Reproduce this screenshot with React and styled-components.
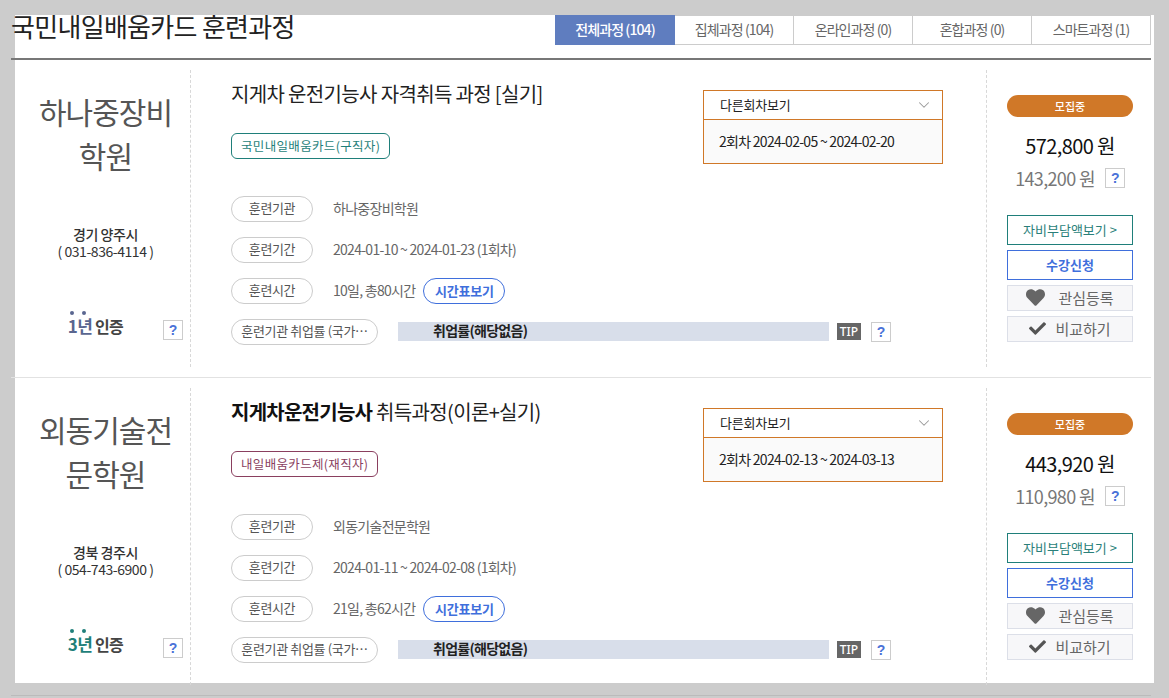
import React from 'react';
import styled, { createGlobalStyle } from 'styled-components';
import { FaHeart, FaCheck } from 'react-icons/fa';
import { ChevronDown } from 'lucide-react';

const Global = createGlobalStyle`
  html, body { margin: 0; padding: 0; background: #cccccc; }
  * { box-sizing: border-box; }
  body { font-family: "Noto Sans CJK KR", "Noto Sans", sans-serif; color: #333; }
`;
const Page = styled.div`
  width: 1169px; height: 698px; padding: 15px 15px 0; overflow: hidden; position: relative;
`;
const Panel = styled.div`
  width: 1139px; height: 668px; background: #fff;
`;
const Inner = styled.div`
  width: 1140px; margin-left: -4px;
`;
const Header = styled.div`
  height: 45px; border-bottom: 2px solid #777; display: flex; justify-content: space-between; align-items: flex-start;
`;
const Title = styled.h1`
  margin: 0; height: 29px; overflow: hidden; font-size: 26px; font-weight: 400; line-height: 22px; color: #222; letter-spacing: -0.7px;
`;
const Tabs = styled.div`
  display: flex; width: 596px; height: 30px; border-top: 1px solid #aaa;
`;
const Tab = styled.div`
  flex: 1; margin-top: -1px; height: 30px; display: flex; align-items: center; justify-content: center; padding-bottom: 2px;
  font-size: 14px; letter-spacing: -0.9px;
  color: ${p => p.$active ? '#fff' : '#666'};
  font-weight: ${p => p.$active ? 500 : 400};
  background: ${p => p.$active ? '#5f7dbf' : '#fff'};
  border: 1px solid ${p => p.$active ? '#5f7dbf' : '#ccc'};
  border-left-width: ${p => p.$first ? '1px' : '0'};
`;
const Row = styled.div`
  height: 318px; padding: 10px 0; display: flex; border-bottom: 1px solid ${p => p.$last ? '#bbb' : '#e2e2e2'};
`;
const Left = styled.div`
  width: 180px; height: 297px; border-right: 1px dashed #d8d8d8; position: relative; text-align: center;
  display: flex; flex-direction: column; align-items: center; padding-right: 10px;
`;
const Name = styled.div`
  margin-top: 19px; width: 150px; font-size: 30px; line-height: 44px; color: #555; letter-spacing: -0.95px; height: 88px; margin-left: 20px; word-break: break-all;
`;
const Addr = styled.div`
  margin-top: 49px; font-size: 14px; line-height: 17px; color: #333; letter-spacing: -0.45px; margin-left: 20px;
  b { font-weight: 500; display: block; }
`;
const CertRow = styled.div`
  margin-top: 55px; font-size: 16px; font-weight: 700; color: #444; letter-spacing: -0.7px; line-height: 22px;
`;
const CertYear = styled.span`
  color: ${p => p.$color}; position: relative; font-size: 17px;
  &::before, &::after {
    content: ''; position: absolute; top: -2px; width: 4px; height: 4px; border-radius: 50%; background: ${p => p.$color};
  }
  &::before { left: 2px; }
  &::after { left: 14px; }
`;
const Help = styled.span`
  width: 20px; height: 20px; border: 1px solid #ccc; background: #fff; color: #4a72d8; font-size: 14px; font-weight: 700;
  font-family: "Liberation Sans", sans-serif;
  display: inline-flex; align-items: center; justify-content: center; flex: none;
`;
const CertHelp = styled(Help)`
  position: absolute; right: 7px; top: 250px;
`;
const Mid = styled.div`
  width: 796px; height: 297px; padding: 0 43px 0 40px; border-right: 1px dashed #d8d8d8; flex: none;
`;
const Top = styled.div`
  display: flex; justify-content: space-between; height: 116px;
`;
const CourseTitle = styled.div`
  margin-top: 11px; font-size: 20px; line-height: 26px; color: #222; letter-spacing: -0.65px;
  b { font-weight: 700; color: #111; letter-spacing: -0.75px; }
`;
const Tag = styled.span`
  display: inline-block; margin-top: 26px; height: 26px; padding: 0 9px; border: 1px solid ${p => p.$color}; border-radius: 6px;
  color: ${p => p.$color}; font-size: 12.5px; line-height: 24px; letter-spacing: 0.33px;
`;
const Select = styled.div`
  width: 240px; height: 74px; margin-top: 20px; border: 1px solid #d07828; background: #fafafa; flex: none;
`;
const SelectHead = styled.div`
  height: 29px; background: #fff; border-bottom: 1px solid #d07828; display: flex; align-items: center; justify-content: space-between;
  padding: 0 9px 1px 16px; font-size: 13px; color: #222; letter-spacing: -0.2px;
  svg { color: #999; margin-top: 1px; }
`;
const SelectBody = styled.div`
  height: 43px; display: flex; align-items: center; padding: 0 0 2px 15px; font-size: 14px; color: #222; letter-spacing: -0.72px;
`;
const Info = styled.div`
  display: flex; flex-direction: column; gap: 15px; margin-top: 10px;
`;
const InfoRow = styled.div`
  display: flex; align-items: center; height: 26px;
`;
const Pill = styled.span`
  width: ${p => p.$w || 82}px; height: 26px; border: 1px solid #ccc; border-radius: 13px; display: inline-flex; align-items: center; justify-content: center; padding-bottom: 3px;
  font-size: 13px; color: #555; letter-spacing: -0.35px; flex: none; white-space: nowrap;
`;
const Value = styled.span`
  margin-left: 20px; margin-top: -2px; font-size: 14px; color: #666; letter-spacing: -0.72px;
`;
const ScheduleBtn = styled.span`
  margin-left: 8px; width: 82px; height: 26px; border: 1px solid #3f6fdc; border-radius: 13px; display: inline-flex; align-items: center; justify-content: center; padding-bottom: 2px;
  font-size: 13px; font-weight: 700; color: #3f6fdc; letter-spacing: -0.2px;
`;
const RateBar = styled.div`
  margin: -1px 0 0 20px; width: 431px; height: 19px; background: #d8deea; padding-left: 35px; font-size: 14px; font-weight: 700; color: #222; line-height: 17px; letter-spacing: -0.72px;
`;
const Tip = styled.span`
  margin: -1px 0 0 8px; width: 24px; height: 17px; background: #666; color: #fff; font-size: 12px; font-weight: 500; display: inline-flex; align-items: center; justify-content: center; font-family: "Noto Sans", sans-serif;
`;
const TipHelp = styled(Help)`
  margin: -1px 0 0 10px;
`;
const Right = styled.div`
  flex: 1; height: 297px; display: flex; flex-direction: column; align-items: center; padding: 25px 0 0 2px;
`;
const Badge = styled.div`
  width: 126px; height: 22px; border-radius: 11px; background: #d07828; color: #fff; font-size: 11px; font-weight: 500; display: flex; align-items: center; justify-content: center; padding-bottom: 1px;
`;
const Price = styled.div`
  margin-top: 14px; height: 30px; font-size: 20px; line-height: 30px; color: #111; letter-spacing: -0.6px;
`;
const SubPrice = styled.div`
  margin-top: 2px; height: 30px; display: flex; align-items: center; gap: 10px; font-size: 18px; color: #777; letter-spacing: -0.65px;
`;
const Stack = styled.div`
  margin-top: 22px; width: 126px; display: flex; flex-direction: column; gap: 5px;
`;
const Btn = styled.div`
  height: ${p => p.$h}px; border: 1px solid ${p => p.$border}; background: ${p => p.$bg || '#fff'}; color: ${p => p.$color};
  font-size: ${p => p.$fs || 13}px; font-weight: ${p => p.$bold ? 700 : 400}; letter-spacing: 0;
  display: flex; align-items: center; justify-content: center; gap: ${p => p.$gap || 0}px; padding-bottom: 2px;
`;

const data = [
  { name: '하나중장비학원', addr: '경기 양주시', tel: '( 031-836-4114 )', year: '1년', yc: '#5a6690',
    title: <>지게차 운전기능사 자격취득 과정 [실기]</>, tag: '국민내일배움카드(구직자)', tc: '#1f7f7a',
    round: '2회차 2024-02-05 ~ 2024-02-20', org: '하나중장비학원', period: '2024-01-10 ~ 2024-01-23 (1회차)', hours: '10일, 총80시간',
    price: '572,800 원', sub: '143,200 원' },
  { name: '외동기술전문학원', addr: '경북 경주시', tel: '( 054-743-6900 )', year: '3년', yc: '#1f7f7a',
    title: <><b>지게차운전기능사</b> 취득과정(이론+실기)</>, tag: '내일배움카드제(재직자)', tc: '#8a3f5f',
    round: '2회차 2024-02-13 ~ 2024-03-13', org: '외동기술전문학원', period: '2024-01-11 ~ 2024-02-08 (1회차)', hours: '21일, 총62시간',
    price: '443,920 원', sub: '110,980 원' },
];

const Course = ({ d, last }) => (
  <Row $last={last}>
    <Left>
      <Name>{d.name}</Name>
      <Addr><b>{d.addr}</b>{d.tel}</Addr>
      <CertRow><CertYear $color={d.yc}>{d.year}</CertYear> 인증</CertRow>
      <CertHelp>?</CertHelp>
    </Left>
    <Mid>
      <Top>
        <div>
          <CourseTitle>{d.title}</CourseTitle>
          <Tag $color={d.tc}>{d.tag}</Tag>
        </div>
        <Select>
          <SelectHead>다른회차보기<ChevronDown size={18} strokeWidth={1.4} /></SelectHead>
          <SelectBody>{d.round}</SelectBody>
        </Select>
      </Top>
      <Info>
        <InfoRow><Pill>훈련기관</Pill><Value>{d.org}</Value></InfoRow>
        <InfoRow><Pill>훈련기간</Pill><Value>{d.period}</Value></InfoRow>
        <InfoRow><Pill>훈련시간</Pill><Value>{d.hours}</Value><ScheduleBtn>시간표보기</ScheduleBtn></InfoRow>
        <InfoRow>
          <Pill $w={147}>훈련기관 취업률 (국가…</Pill>
          <RateBar>취업률(해당없음)</RateBar>
          <Tip>TIP</Tip>
          <TipHelp>?</TipHelp>
        </InfoRow>
      </Info>
    </Mid>
    <Right>
      <Badge>모집중</Badge>
      <Price>{d.price}</Price>
      <SubPrice>{d.sub}<Help>?</Help></SubPrice>
      <Stack>
        <Btn $h={30} $border="#1f7f7a" $color="#2a7f7a">자비부담액보기 &gt;</Btn>
        <Btn $h={30} $border="#3f6fdc" $color="#3f6fdc" $bold>수강신청</Btn>
        <Btn $h={26} $border="#dcdfe8" $bg="#f7f7f9" $color="#666" $fs={15} $gap={13}><FaHeart size={19} color="#666" />관심등록</Btn>
        <Btn $h={26} $border="#dcdfe8" $bg="#f7f7f9" $color="#666" $fs={15} $gap={9}><FaCheck size={17} color="#555" />비교하기</Btn>
      </Stack>
    </Right>
  </Row>
);

export default function App() {
  return (
    <Page>
      <Global />
      <Panel>
        <Inner>
          <Header>
            <Title>국민내일배움카드 훈련과정</Title>
            <Tabs>
              <Tab $active $first>전체과정 (104)</Tab>
              <Tab>집체과정 (104)</Tab>
              <Tab>온라인과정 (0)</Tab>
              <Tab>혼합과정 (0)</Tab>
              <Tab>스마트과정 (1)</Tab>
            </Tabs>
          </Header>
          {data.map((d, i) => <Course key={d.name} d={d} last={i === 1} />)}
        </Inner>
      </Panel>
    </Page>
  );
}
